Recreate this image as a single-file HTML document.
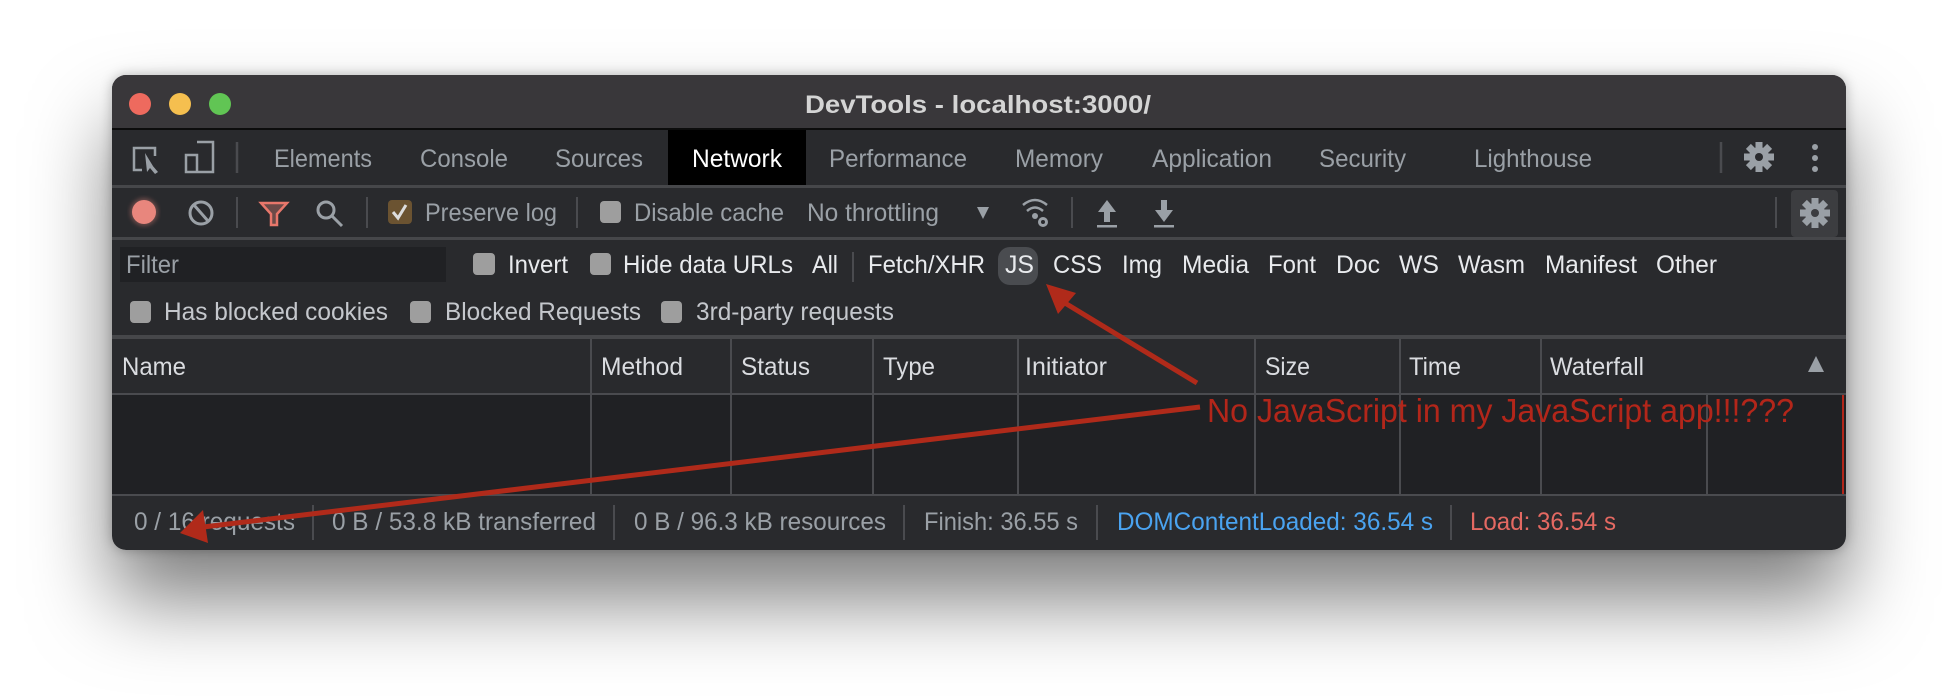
<!DOCTYPE html>
<html><head><meta charset="utf-8"><style>
html,body{margin:0;padding:0;background:#fff;width:1958px;height:698px;overflow:hidden}
#sh{position:absolute;left:112px;top:75px;width:1734px;height:475px;border-radius:14px;box-shadow:0 50px 80px rgba(0,0,0,0.5),0 0 12px rgba(0,0,0,0.25)}
svg{position:absolute;left:0;top:0}
text{font-family:"Liberation Sans",sans-serif}
</style></head><body>
<div id="sh"></div>
<svg width="1958" height="698" viewBox="0 0 1958 698">
<defs><clipPath id="w"><rect x="112" y="75" width="1734" height="475" rx="14"/></clipPath>
<filter id="gl"><feGaussianBlur stdDeviation="2"/></filter></defs>
<g clip-path="url(#w)">
<rect x="112" y="75" width="1734" height="475" fill="#292a2d"/>
<rect x="112" y="75" width="1734" height="54" fill="#39373a"/>
<rect x="112" y="128" width="1734" height="2" fill="#0c0c0c"/>
<rect x="668" y="130" width="138" height="55" fill="#000"/>
<rect x="112" y="185" width="1734" height="3" fill="#46474a"/>
<rect x="112" y="237" width="1734" height="3" fill="#46474a"/>
<rect x="120" y="247" width="326" height="35" fill="#202124"/>
<rect x="112" y="335" width="1734" height="4" fill="#46474a"/>
<rect x="112" y="393" width="1734" height="2" fill="#4a4b4f"/>
<rect x="112" y="395" width="1734" height="99" fill="#202124"/>
<rect x="112" y="494" width="1734" height="2" fill="#4a4b4f"/>
<rect x="1842" y="395" width="2" height="99" fill="#b3261a"/>
<g stroke="#4a4b4f" stroke-width="2">
<line x1="591" y1="339" x2="591" y2="494"/><line x1="731" y1="339" x2="731" y2="494"/>
<line x1="873" y1="339" x2="873" y2="494"/><line x1="1018" y1="339" x2="1018" y2="494"/>
<line x1="1255" y1="339" x2="1255" y2="494"/><line x1="1400" y1="339" x2="1400" y2="494"/>
<line x1="1541" y1="339" x2="1541" y2="494"/><line x1="1707" y1="395" x2="1707" y2="494"/>
</g>
<rect x="1791" y="190" width="47" height="47" rx="4" fill="#3c3d40"/>
</g>
<circle cx="140" cy="104" r="11" fill="#ee6a5e"/><circle cx="180" cy="104" r="11" fill="#f5bf4f"/><circle cx="220" cy="104" r="11" fill="#61c554"/>
<text x="978" y="113" text-anchor="middle" font-size="25" font-weight="bold" fill="#d4d4d4" textLength="346" lengthAdjust="spacingAndGlyphs">DevTools - localhost:3000/</text>
<g stroke="#9aa0a6" stroke-width="2.5" fill="none">
<path d="M142 170 H134 V148 H155 V156"/>
<path d="M186 155 H197 V172 H186 Z M197 142 H213 V172 H197"/>
<line x1="237" y1="142" x2="237" y2="173" stroke="#4a4b4f"/>
<line x1="1721" y1="142" x2="1721" y2="173" stroke="#4a4b4f"/>
</g>
<path d="M145 153 L156 171 L152 165 L158 172 L155 174 L150 168 L147 172 Z" fill="#9aa0a6"/>
<g font-size="25" fill="#9aa0a6">
<text x="274" y="167" textLength="98" lengthAdjust="spacingAndGlyphs">Elements</text>
<text x="420" y="167" textLength="88" lengthAdjust="spacingAndGlyphs">Console</text>
<text x="555" y="167" textLength="88" lengthAdjust="spacingAndGlyphs">Sources</text>
<text x="692" y="167" textLength="90" lengthAdjust="spacingAndGlyphs" fill="#fff">Network</text>
<text x="829" y="167" textLength="138" lengthAdjust="spacingAndGlyphs">Performance</text>
<text x="1015" y="167" textLength="88" lengthAdjust="spacingAndGlyphs">Memory</text>
<text x="1152" y="167" textLength="120" lengthAdjust="spacingAndGlyphs">Application</text>
<text x="1319" y="167" textLength="87" lengthAdjust="spacingAndGlyphs">Security</text>
<text x="1474" y="167" textLength="118" lengthAdjust="spacingAndGlyphs">Lighthouse</text>
</g>
<g fill="#9aa0a6">
<g transform="translate(1759,157)"><circle r="10"/><rect x="-3.5" y="-15" width="7" height="30"/><rect x="-3.5" y="-15" width="7" height="30" transform="rotate(45)"/><rect x="-3.5" y="-15" width="7" height="30" transform="rotate(90)"/><rect x="-3.5" y="-15" width="7" height="30" transform="rotate(135)"/><circle r="4" fill="#292a2d"/></g>
<g transform="translate(1815,213)"><circle r="10"/><rect x="-3.5" y="-15" width="7" height="30"/><rect x="-3.5" y="-15" width="7" height="30" transform="rotate(45)"/><rect x="-3.5" y="-15" width="7" height="30" transform="rotate(90)"/><rect x="-3.5" y="-15" width="7" height="30" transform="rotate(135)"/><circle r="4" fill="#3c3d40"/></g>
<circle cx="1815" cy="147" r="3"/><circle cx="1815" cy="158" r="3"/><circle cx="1815" cy="169" r="3"/>
</g>
<circle cx="144" cy="212" r="14" fill="#e8867d" opacity="0.35" filter="url(#gl)"/>
<circle cx="144" cy="212" r="12" fill="#e8867d"/>
<g stroke="#9aa0a6" stroke-width="3" fill="none">
<circle cx="201" cy="213" r="11"/><line x1="194" y1="205" x2="208" y2="221"/>
<circle cx="326" cy="210" r="8"/><line x1="332" y1="216" x2="342" y2="226"/>
</g>
<path d="M261 203 H287 L277 214 V225 H271 V214 Z" fill="#6b4a48" stroke="#e8776b" stroke-width="2.5"/>
<g stroke="#4a4b4f" stroke-width="2"><line x1="237" y1="197" x2="237" y2="228"/><line x1="367" y1="197" x2="367" y2="228"/><line x1="577" y1="197" x2="577" y2="228"/><line x1="1072" y1="197" x2="1072" y2="228"/><line x1="1776" y1="197" x2="1776" y2="228"/><line x1="853" y1="252" x2="853" y2="282"/>
<line x1="313" y1="505" x2="313" y2="540"/><line x1="614" y1="505" x2="614" y2="540"/><line x1="904" y1="505" x2="904" y2="540"/><line x1="1097" y1="505" x2="1097" y2="540"/><line x1="1451" y1="505" x2="1451" y2="540"/></g>
<rect x="388" y="200" width="24" height="24" rx="4" fill="#6b5331"/>
<path d="M393 212 L398 218 L406 205" stroke="#ddd" stroke-width="3" fill="none"/>
<g fill="#9e9e9e"><rect x="600" y="201" width="21" height="22" rx="4"/>
<rect x="473" y="253" width="22" height="22" rx="4"/><rect x="590" y="253" width="21" height="22" rx="4"/>
<rect x="130" y="301" width="21" height="22" rx="4"/><rect x="410" y="301" width="21" height="22" rx="4"/><rect x="661" y="301" width="21" height="22" rx="4"/></g>
<g font-size="25" fill="#9aa0a6">
<text x="425" y="221" textLength="132" lengthAdjust="spacingAndGlyphs">Preserve log</text>
<text x="634" y="221" textLength="150" lengthAdjust="spacingAndGlyphs">Disable cache</text>
<text x="807" y="221" textLength="132" lengthAdjust="spacingAndGlyphs">No throttling</text>
<text x="126" y="273" textLength="53" lengthAdjust="spacingAndGlyphs">Filter</text>
</g>
<path d="M977 207 H989 L983 219 Z" fill="#9aa0a6"/>
<g fill="none" stroke="#9aa0a6" stroke-width="2.5"><path d="M1023 205 Q1035 195 1047 205"/><path d="M1027 211 Q1035 204 1043 211"/></g>
<circle cx="1035" cy="216" r="3" fill="#9aa0a6"/><circle cx="1043" cy="222" r="5" fill="#9aa0a6"/><circle cx="1043" cy="222" r="2" fill="#292a2d"/>
<g fill="#9aa0a6"><path d="M1107 200 L1116 212 H1110 V222 H1104 V212 H1098 Z"/><rect x="1097" y="225" width="20" height="2.5"/>
<path d="M1164 222 L1173 210 H1167 V200 H1161 V210 H1155 Z"/><rect x="1154" y="225" width="20" height="2.5"/></g>
<rect x="998" y="247" width="40" height="38" rx="12" fill="#4a4c50"/>
<g font-size="25" fill="#e8eaed">
<text x="508" y="273" textLength="60" lengthAdjust="spacingAndGlyphs">Invert</text>
<text x="623" y="273" textLength="170" lengthAdjust="spacingAndGlyphs">Hide data URLs</text>
<text x="812" y="273" textLength="26" lengthAdjust="spacingAndGlyphs">All</text>
<text x="868" y="273" textLength="117" lengthAdjust="spacingAndGlyphs">Fetch/XHR</text>
<text x="1005" y="273" textLength="29" lengthAdjust="spacingAndGlyphs">JS</text>
<text x="1053" y="273" textLength="49" lengthAdjust="spacingAndGlyphs">CSS</text>
<text x="1122" y="273" textLength="40" lengthAdjust="spacingAndGlyphs">Img</text>
<text x="1182" y="273" textLength="67" lengthAdjust="spacingAndGlyphs">Media</text>
<text x="1268" y="273" textLength="48" lengthAdjust="spacingAndGlyphs">Font</text>
<text x="1336" y="273" textLength="44" lengthAdjust="spacingAndGlyphs">Doc</text>
<text x="1399" y="273" textLength="40" lengthAdjust="spacingAndGlyphs">WS</text>
<text x="1458" y="273" textLength="67" lengthAdjust="spacingAndGlyphs">Wasm</text>
<text x="1545" y="273" textLength="92" lengthAdjust="spacingAndGlyphs">Manifest</text>
<text x="1656" y="273" textLength="61" lengthAdjust="spacingAndGlyphs">Other</text>
<text x="164" y="320" textLength="224" lengthAdjust="spacingAndGlyphs" fill="#c4c7cc">Has blocked cookies</text>
<text x="445" y="320" textLength="196" lengthAdjust="spacingAndGlyphs" fill="#c4c7cc">Blocked Requests</text>
<text x="696" y="320" textLength="198" lengthAdjust="spacingAndGlyphs" fill="#c4c7cc">3rd-party requests</text>
</g>
<g font-size="25" fill="#dadce0">
<text x="122" y="375" textLength="64" lengthAdjust="spacingAndGlyphs">Name</text>
<text x="601" y="375" textLength="82" lengthAdjust="spacingAndGlyphs">Method</text>
<text x="741" y="375" textLength="69" lengthAdjust="spacingAndGlyphs">Status</text>
<text x="883" y="375" textLength="52" lengthAdjust="spacingAndGlyphs">Type</text>
<text x="1025" y="375" textLength="82" lengthAdjust="spacingAndGlyphs">Initiator</text>
<text x="1265" y="375" textLength="45" lengthAdjust="spacingAndGlyphs">Size</text>
<text x="1409" y="375" textLength="52" lengthAdjust="spacingAndGlyphs">Time</text>
<text x="1550" y="375" textLength="94" lengthAdjust="spacingAndGlyphs">Waterfall</text>
</g>
<path d="M1816 356 L1824 372 H1808 Z" fill="#9aa0a6"/>
<g font-size="25" fill="#9aa0a6">
<text x="134" y="530" textLength="161" lengthAdjust="spacingAndGlyphs">0 / 16 requests</text>
<text x="332" y="530" textLength="264" lengthAdjust="spacingAndGlyphs">0 B / 53.8 kB transferred</text>
<text x="634" y="530" textLength="252" lengthAdjust="spacingAndGlyphs">0 B / 96.3 kB resources</text>
<text x="924" y="530" textLength="154" lengthAdjust="spacingAndGlyphs">Finish: 36.55 s</text>
<text x="1117" y="530" textLength="316" lengthAdjust="spacingAndGlyphs" fill="#4aa3f0">DOMContentLoaded: 36.54 s</text>
<text x="1470" y="530" textLength="146" lengthAdjust="spacingAndGlyphs" fill="#e46962">Load: 36.54 s</text>
</g>
<g stroke="#b02a1a" stroke-width="5" fill="#b02a1a">
<line x1="1197" y1="383" x2="1060" y2="300"/>
<line x1="1200" y1="407" x2="195" y2="528"/>
</g>
<path d="M1046 284 L1076 293 L1058 314 Z" fill="#b02a1a"/>
<path d="M180 533 L203 510 L208 543 Z" fill="#b02a1a"/>
<text x="1207" y="422" font-size="33" fill="#b3261a" textLength="587" lengthAdjust="spacingAndGlyphs">No JavaScript in my JavaScript app!!!???</text>
</svg>
</body></html>
